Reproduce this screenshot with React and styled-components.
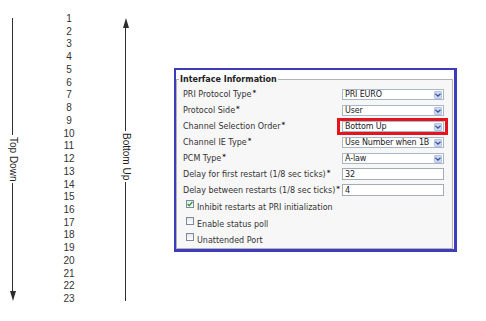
import styled, { createGlobalStyle } from 'styled-components';

const GlobalStyle = createGlobalStyle`
  html, body {
    margin: 0;
    padding: 0;
    background: #fff;
  }
  body {
    font-family: "Liberation Sans", Arial, sans-serif;
  }
`;

const numbers = Array.from({ length: 23 }, (_, i) => i + 1);

const fields = [
  { label: 'PRI Protocol Type', kind: 'select', value: 'PRI EURO' },
  { label: 'Protocol Side', kind: 'select', value: 'User' },
  { label: 'Channel Selection Order', kind: 'select', value: 'Bottom Up', marked: true },
  { label: 'Channel IE Type', kind: 'select', value: 'Use Number when 1B' },
  { label: 'PCM Type', kind: 'select', value: 'A-law' },
  { label: 'Delay for first restart (1/8 sec ticks)', kind: 'input', value: '32' },
  { label: 'Delay between restarts (1/8 sec ticks)', kind: 'input', value: '4' },
];

const checks = [
  { label: 'Inhibit restarts at PRI initialization', checked: true },
  { label: 'Enable status poll', checked: false },
  { label: 'Unattended Port', checked: false },
];

function Arrow({ label, up }) {
  return (
    <ArrowCol>
      {up && <Head $up />}
      <Line $h={up ? 103 : 117} />
      <ArrowLabel>{label}</ArrowLabel>
      <Line $grow />
      {!up && <Head />}
    </ArrowCol>
  );
}

function Select({ value }) {
  return (
    <SelectBox>
      <SelectText>{value}</SelectText>
      <SelectButton>
        <svg width="6" height="4" viewBox="0 0 6 4">
          <polyline points="0.5,0.8 3,3.2 5.5,0.8" fill="none" stroke="#3f5596" strokeWidth="1.3" />
        </svg>
      </SelectButton>
    </SelectBox>
  );
}

function App() {
  return (
    <>
      <GlobalStyle />
      <Page>
        <Arrow label="Top Down" />
        <Numbers>
          {numbers.map((n) => <div key={n}>{n}</div>)}
        </Numbers>
        <Arrow label="Bottom Up" up />
        <Panel>
          <Fieldset>
            <Legend>Interface Information</Legend>
            {fields.map((f) => (
              <Row key={f.label}>
                <Label>{f.label}<Req>*</Req></Label>
                {f.kind === 'select' ? (
                  f.marked ? (
                    <Highlight><Select value={f.value} /></Highlight>
                  ) : (
                    <Select value={f.value} />
                  )
                ) : (
                  <TextInput readOnly value={f.value} />
                )}
              </Row>
            ))}
            {checks.map((c) => (
              <CheckRow key={c.label}>
                <Box>
                  {c.checked && (
                    <svg width="6" height="6" viewBox="0 0 6 6">
                      <polyline points="0.6,3 2.3,4.8 5.4,0.9" fill="none" stroke="#2f9a2f" strokeWidth="1.4" />
                    </svg>
                  )}
                </Box>
                <CheckText>{c.label}</CheckText>
              </CheckRow>
            ))}
          </Fieldset>
        </Panel>
      </Page>
    </>
  );
}

const Page = styled.div`
  display: flex;
  align-items: flex-start;
  width: 486px;
  height: 321px;
  padding-left: 8px;
  box-sizing: border-box;
  overflow: hidden;
`;

const ArrowCol = styled.div`
  width: 9px;
  height: 283px;
  margin-top: 18px;
  display: flex;
  flex-direction: column;
  align-items: center;
  flex-shrink: 0;
`;

const Line = styled.div`
  width: 1px;
  background: #2e2e2e;
  height: ${(p) => (p.$h ? `${p.$h}px` : 'auto')};
  flex: ${(p) => (p.$grow ? 1 : 'none')};
`;

const Head = styled.div`
  width: 0;
  height: 0;
  border-left: 3px solid transparent;
  border-right: 3px solid transparent;
  ${(p) => (p.$up ? 'border-bottom: 10px solid #2e2e2e;' : 'border-top: 10px solid #2e2e2e;')}
`;

const ArrowLabel = styled.div`
  writing-mode: vertical-rl;
  font-size: 10px;
  line-height: 10px;
  margin: 2px 0;
  color: #1e1e1e;
  white-space: nowrap;
`;

const Numbers = styled.div`
  width: 104px;
  padding-top: 13px;
  text-align: center;
  font-size: 10px;
  line-height: 12.73px;
  color: #333;
  flex-shrink: 0;
`;

const Panel = styled.div`
  width: 283px;
  height: 184px;
  margin: 68px 0 0 44px;
  box-sizing: border-box;
  border-style: solid;
  border-color: #3c3cbd;
  border-width: 2px 3px 3px 2px;
  background: #fff;
  display: flex;
  flex-direction: column;
  flex-shrink: 0;
`;

const Fieldset = styled.fieldset`
  flex: 1;
  min-width: 0;
  margin: 5px 1px 1px 0;
  padding: 3px 0 0 0;
  border: 1px solid #b2b2b2;
  background: #f7f7f7;
  font-family: "DejaVu Sans", Verdana, sans-serif;
  font-size: 8px;
  color: #333;
`;

const Legend = styled.legend`
  margin-left: 2px;
  padding: 0 1px;
  font-weight: bold;
  color: #222;
`;

const Row = styled.div`
  display: grid;
  grid-template-columns: 159px 102px;
  align-items: center;
  height: 15.9px;
  padding-left: 6px;
`;

const Label = styled.span`
  white-space: nowrap;
`;

const Req = styled.span`
  position: relative;
  top: -2px;
  margin-left: 1px;
  font-size: 7px;
  font-weight: bold;
  color: #222;
`;

const SelectBox = styled.div`
  display: flex;
  align-items: center;
  height: 11px;
  box-sizing: border-box;
  border: 1px solid #a9b7cc;
  background: #fff;
`;

const SelectText = styled.span`
  flex: 1;
  min-width: 0;
  overflow: hidden;
  white-space: nowrap;
  padding-left: 2px;
  line-height: 9px;
  letter-spacing: -0.15px;
  color: #222;
`;

const SelectButton = styled.span`
  display: flex;
  align-items: center;
  justify-content: center;
  width: 8px;
  height: 8px;
  margin: 0 1px 0 1px;
  box-sizing: border-box;
  border: 1px solid #b3c2e0;
  border-radius: 1px;
  background: #cfdaf3;
`;

const Highlight = styled.div`
  position: relative;

  &::after {
    content: '';
    position: absolute;
    inset: -3px -4px -3px -5px;
    border: 3px solid #e3141b;
    pointer-events: none;
  }
`;

const TextInput = styled.input`
  width: 102px;
  height: 12px;
  box-sizing: border-box;
  margin: 0;
  padding: 0 2px;
  border: 1px solid #a3abb5;
  background: #fff;
  font-family: "DejaVu Sans", Verdana, sans-serif;
  font-size: 8px;
  color: #222;
  outline: none;
`;

const CheckRow = styled.div`
  display: flex;
  align-items: flex-start;
  gap: 3px;
  height: 16.5px;
  padding-left: 9px;
`;

const Box = styled.span`
  display: flex;
  align-items: center;
  justify-content: center;
  width: 8px;
  height: 8px;
  margin-top: 2px;
  box-sizing: border-box;
  border: 1px solid #7d8a9c;
  background: linear-gradient(#e4e9f1, #fdfdfd);
`;

const CheckText = styled.span`
  margin-top: 5px;
  line-height: 9px;
  white-space: nowrap;
`;

export default App;
